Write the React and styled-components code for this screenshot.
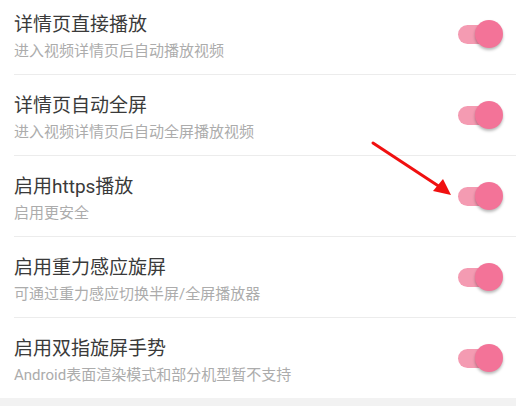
import React from 'react';
import styled, { createGlobalStyle } from 'styled-components';

const GlobalStyle = createGlobalStyle`
  html, body {
    margin: 0;
    padding: 0;
    background: #ffffff;
    font-family: Roboto, "Noto Sans CJK SC", sans-serif;
  }
`;

const settings = [
  { title: '详情页直接播放', desc: '进入视频详情页后自动播放视频' },
  { title: '详情页自动全屏', desc: '进入视频详情页后自动全屏播放视频' },
  { title: '启用https播放', desc: '启用更安全' },
  { title: '启用重力感应旋屏', desc: '可通过重力感应切换半屏/全屏播放器' },
  { title: '启用双指旋屏手势', desc: 'Android表面渲染模式和部分机型暂不支持' },
];

function App() {
  return (
    <Page>
      <GlobalStyle />
      <List>
        {settings.map((item, i) => (
          <Row key={item.title} last={i === settings.length - 1}>
            <Texts>
              <Title>{item.title}</Title>
              <Desc>{item.desc}</Desc>
            </Texts>
            <Switch>
              <Track />
              <Thumb />
            </Switch>
          </Row>
        ))}
      </List>
      <Footer />
      <Arrow width="90" height="60" viewBox="0 0 90 60">
        <line x1="2" y1="2" x2="72" y2="48" stroke="#f01010" strokeWidth="3" strokeLinecap="round" />
        <polygon points="80,54 62,50 72,38" fill="#f01010" />
      </Arrow>
    </Page>
  );
}

const Page = styled.div`
  position: relative;
  width: 516px;
  height: 406px;
  overflow: hidden;
  background: #ffffff;
`;

const List = styled.div`
  margin-top: -6px;
  display: flex;
  flex-direction: column;
`;

const Row = styled.div`
  margin-left: 14px;
  padding-right: 13px;
  height: 80px;
  border-bottom: ${(p) => (p.last ? 'none' : '1px solid #ececec')};
  display: flex;
  align-items: center;
  justify-content: space-between;
`;

const Texts = styled.div`
  display: flex;
  flex-direction: column;
  gap: 5px;
  margin-top: 6px;
`;

const Title = styled.div`
  font-size: 19px;
  line-height: 22px;
  color: #3a3a3a;
`;

const Desc = styled.div`
  font-size: 15px;
  line-height: 20px;
  color: #acacac;
`;

const Switch = styled.div`
  position: relative;
  width: 45px;
  height: 28px;
  display: flex;
  align-items: center;
`;

const Track = styled.div`
  width: 38px;
  height: 19px;
  border-radius: 10px;
  background: #f49bb2;
`;

const Thumb = styled.div`
  position: absolute;
  right: 0;
  top: 0;
  width: 28px;
  height: 28px;
  border-radius: 50%;
  background: #f37398;
  box-shadow: 0 2px 3px rgba(0, 0, 0, 0.28);
`;

const Footer = styled.div`
  height: 20px;
  background: #f2f2f2;
`;

const Arrow = styled.svg`
  position: absolute;
  left: 371px;
  top: 141px;
`;

export default App;
